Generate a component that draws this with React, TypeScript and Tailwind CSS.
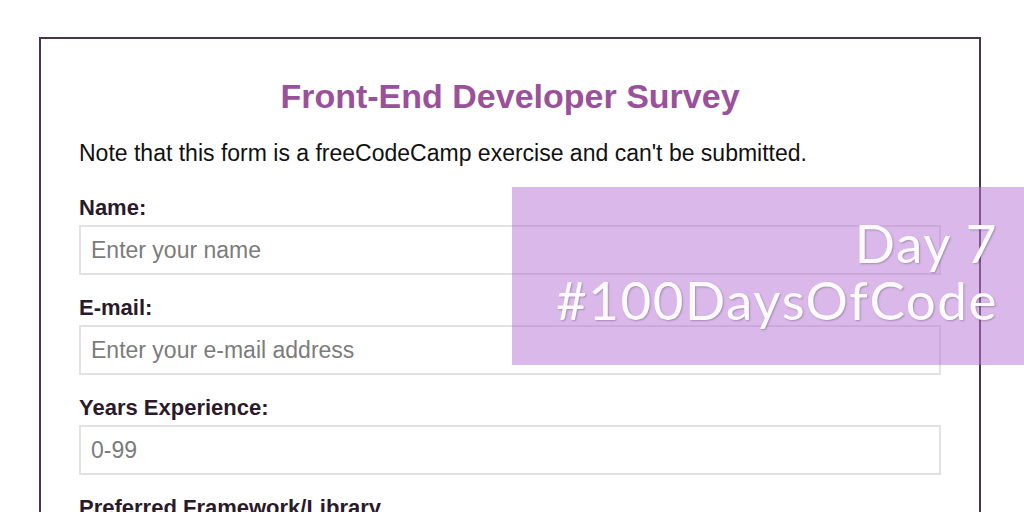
export default function App() {
  const fields = [
    { label: "Name:", placeholder: "Enter your name" },
    { label: "E-mail:", placeholder: "Enter your e-mail address" },
    { label: "Years Experience:", placeholder: "0-99" },
  ];

  return (
    <div className="relative w-[1024px] h-[512px] overflow-hidden bg-white font-['Liberation_Sans',Arial,sans-serif]">
      {/* survey form */}
      <div className="ml-[39px] mt-[37px] w-[942px] h-[540px] border-2 border-[#4a3548] px-[38px]">
        <h1 className="mt-[37px] text-center text-[34px] font-bold leading-[40px] text-[#9a519c]">
          Front-End Developer Survey
        </h1>
        <p className="mt-[24px] text-[23px] leading-[26px] text-[#111]">
          Note that this form is a freeCodeCamp exercise and can't be submitted.
        </p>
        {fields.map((f, i) => (
          <div key={f.label} className={i === 0 ? "mt-[30px]" : "mt-[21px]"}>
            <div className="text-[22px] font-bold leading-[24px] text-[#2a1a2a]">{f.label}</div>
            <div className="mt-[5px] h-[50px] w-[862px] border-2 border-[#e2e2e2] flex items-center px-[10px] text-[23px] text-[#7c7c7c]">
              {f.placeholder}
            </div>
          </div>
        ))}
        <div className="mt-[21px] text-[22px] font-bold leading-[24px] text-[#2a1a2a]">
          Preferred Framework/Library
        </div>
      </div>

      {/* banner overlay */}
      <div className="absolute left-[512px] top-[187px] w-[512px] h-[178px] bg-[rgba(185,120,215,0.52)] flex flex-col items-end pr-[26px] pt-[27px] text-[#fdfbfd] font-['Lato',sans-serif] tracking-[1.5px] [text-shadow:1px_1px_2px_rgba(0,0,0,0.25)]">
        <div className="text-[53px] leading-[57px]">Day 7</div>
        <div className="text-[53px] leading-[57px]">#100DaysOfCode</div>
      </div>
    </div>
  );
}
